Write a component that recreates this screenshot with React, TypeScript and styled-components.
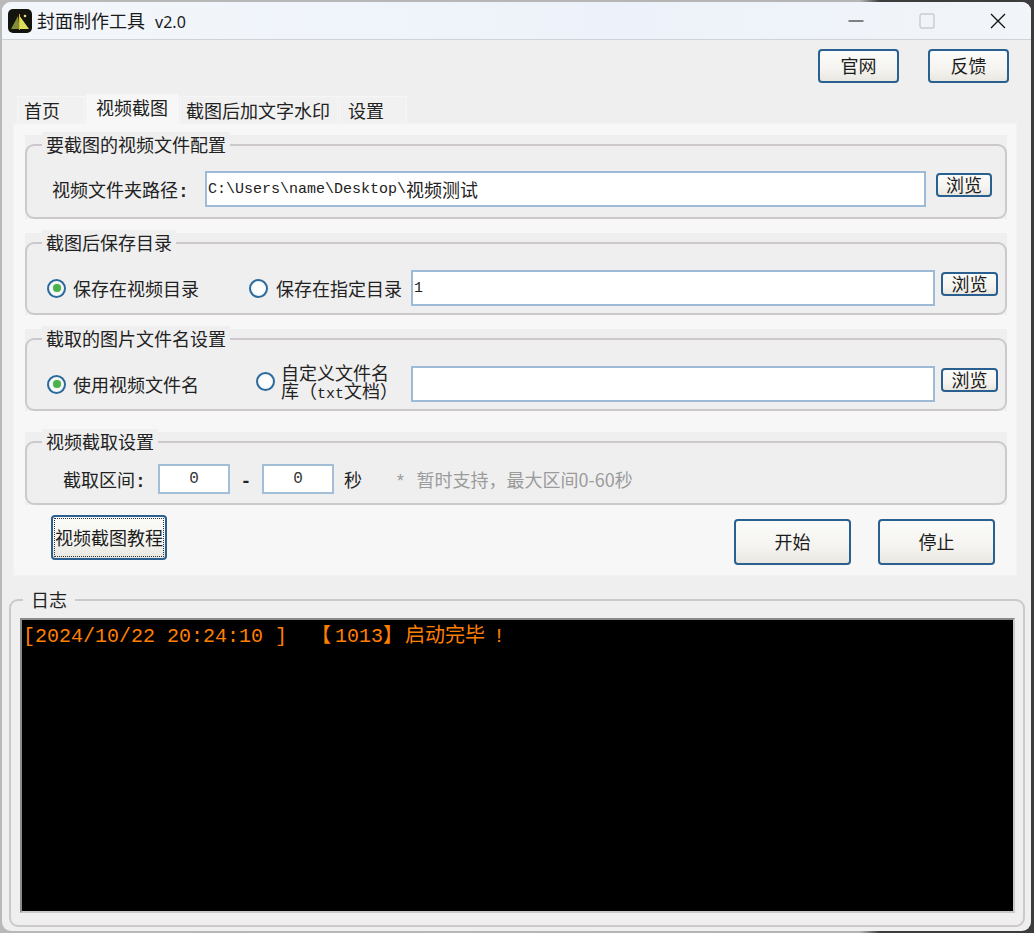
import React from 'react';
import styled, { createGlobalStyle } from 'styled-components';

const CJK = '"Noto Sans CJK SC", "Noto Sans", sans-serif';
const MONO = '"Liberation Mono", "Noto Sans CJK SC", monospace';

const GlobalStyle = createGlobalStyle`
  html, body {
    margin: 0;
    padding: 0;
    background: linear-gradient(90deg, #b9b9b9 0, #b4b4b4 860px, #3c3c3c 880px);
    font-family: ${CJK};
  }
  * { box-sizing: border-box; }
`;

const Desktop = styled.div`
  width: 1034px;
  height: 933px;
  padding: 2px 3px 2px 2px;
  overflow: hidden;
`;

const Window = styled.div`
  width: 1029px;
  height: 929px;
  background: #efefef;
  border-radius: 9px;
  overflow: hidden;
  display: flex;
  flex-direction: column;
  color: #222;
  font-size: 18px;
`;

const TitleBar = styled.div`
  height: 38px;
  flex: none;
  display: flex;
  align-items: center;
  padding-left: 6px;
  background: linear-gradient(90deg, #f3f7fb, #edf2fa 60%, #f1f5f9);
  border-bottom: 1px solid #cfd2d6;
`;

const AppTitle = styled.div`
  margin-left: 5px;
  flex: 1;
  font-size: 18px;
  line-height: 24px;
  color: #1a1a1a;
  white-space: pre;
`;

const TitleVersion = styled.span`
  margin-left: 2px;
  font-family: "Noto Sans", sans-serif;
  font-size: 16px;
`;

const Controls = styled.div`
  display: flex;
  align-items: center;
  padding-right: 25px;
  gap: 55px;
`;

const Toolbar = styled.div`
  display: flex;
  justify-content: flex-end;
  gap: 29px;
  padding: 9px 22px 0 0;
  flex: none;
`;

const Button = styled.button<{ $w: number; $h: number; $focus?: boolean }>`
  width: ${(p) => p.$w}px;
  height: ${(p) => p.$h}px;
  flex: none;
  padding: 0 0 2px;
  border: 2px solid #2a6090;
  border-radius: 4px;
  background: linear-gradient(180deg, #fbfbf9, #f5f4f0 60%, #e9e7e0);
  color: #1c1c1c;
  font-family: ${CJK};
  font-size: 18px;
  line-height: 1;
  white-space: nowrap;
  outline: ${(p) => (p.$focus ? '1px dotted #333' : 'none')};
  outline-offset: ${(p) => (p.$focus ? '-4px' : '0')};
`;

const TabStrip = styled.div`
  display: flex;
  align-items: flex-end;
  height: 29px;
  margin: 11px 0 0 14px;
  flex: none;
  position: relative;
  z-index: 1;
`;

const Tab = styled.div<{ $w: number; $pad: number; $active?: boolean }>`
  width: ${(p) => p.$w}px;
  height: ${(p) => (p.$active ? 30 : 27)}px;
  margin-left: 1px;
  margin-bottom: ${(p) => (p.$active ? -1 : 0)}px;
  padding-left: ${(p) => p.$pad}px;
  line-height: ${(p) => (p.$active ? 24 : 27)}px;
  background: ${(p) => (p.$active ? '#f7f7f7' : '#f1f1f1')};
  border: 1px solid ${(p) => (p.$active ? '#f7f7f7' : '#f6f6f6')};
  border-bottom: none;
  white-space: nowrap;
`;

const Panel = styled.div`
  flex: none;
  width: 1004px;
  height: 453px;
  margin-left: 11px;
  padding: 11px 9px 0 11px;
  background: #f7f7f7;
  border: 1px solid #f2f2f2;
`;

const Group = styled.section<{ $gap?: number }>`
  width: 982px;
  margin-top: ${(p) => p.$gap ?? 0}px;
  padding-top: 9px;
  background: #efefef;
`;

const Frame = styled.div<{ $h: number }>`
  height: ${(p) => p.$h}px;
  border: 2px solid #ccc8cc;
  border-radius: 9px;
  background: #efefef;
`;

const Legend = styled.div`
  width: fit-content;
  margin: -14px 0 0 15px;
  padding: 0 4px;
  height: 24px;
  line-height: 24px;
  background: #efefef;
  white-space: nowrap;
`;

const Row = styled.div<{ $top: number; $left: number; $right: number }>`
  display: flex;
  align-items: center;
  margin-top: ${(p) => p.$top}px;
  padding: 0 ${(p) => p.$right}px 0 ${(p) => p.$left}px;
`;

const Label = styled.span<{ $w?: number; $muted?: boolean; $center?: boolean; $ml?: number }>`
  flex: none;
  width: ${(p) => (p.$w ? `${p.$w}px` : 'auto')};
  margin-left: ${(p) => p.$ml ?? 0}px;
  text-align: ${(p) => (p.$center ? 'center' : 'left')};
  white-space: pre;
  color: ${(p) => (p.$muted ? '#9b9b9b' : '#222')};
`;

const TwoLine = styled.span`
  flex: none;
  width: 110px;
  height: 36px;
  margin: -6px 0 0 6px;
  font-size: 18px;
  line-height: 18px;
  white-space: nowrap;
`;

const Latin = styled.span<{ $size?: number; $bold?: boolean }>`
  font-family: ${MONO};
  font-size: ${(p) => p.$size ?? 15}px;
  line-height: 1;
  font-weight: ${(p) => (p.$bold ? 700 : 400)};
`;

const Field = styled.div<{ $h: number; $ml?: number }>`
  flex: 1;
  height: ${(p) => p.$h}px;
  margin-left: ${(p) => p.$ml ?? 0}px;
  padding-left: 1px;
  display: flex;
  align-items: center;
  background: #fff;
  border: 2px solid #9dbbd6;
  font-size: 18px;
  white-space: pre;
  color: #222;
`;

const SmallField = styled.div`
  width: 72px;
  height: 30px;
  flex: none;
  background: #fff;
  border: 2px solid #a3bfd8;
  display: flex;
  align-items: center;
  justify-content: center;
  font-family: ${MONO};
  font-size: 16px;
  color: #333;
`;

const Radio = styled.span<{ $checked?: boolean; $shift?: number }>`
  width: 19px;
  height: 19px;
  flex: none;
  margin-top: ${(p) => p.$shift ?? 0}px;
  border-radius: 50%;
  border: 2px solid #2c6a9c;
  background: radial-gradient(circle, #fff 40%, #e8edf1);
  display: flex;
  align-items: center;
  justify-content: center;
  &::after {
    content: '';
    display: ${(p) => (p.$checked ? 'block' : 'none')};
    width: 8px;
    height: 8px;
    border-radius: 50%;
    background: #4cb050;
    box-shadow: 0 0 2px #8fd694;
  }
`;

const BrowseButton = styled(Button)<{ $ml: number }>`
  align-self: flex-start;
  margin: 2px 0 0 ${(p) => p.$ml}px;
`;

const Actions = styled.div`
  display: flex;
  align-items: flex-start;
  margin-top: 10px;
  padding-left: 26px;
`;

const ActionButton = styled(Button)<{ $ml: number }>`
  margin: 4px 0 0 ${(p) => p.$ml}px;
`;

const LogGroup = styled.section`
  flex: none;
  width: 1016px;
  height: 328px;
  margin: 23px 0 0 7px;
  border: 2px solid #ccc8cc;
  border-radius: 9px;
  padding: 0 8px 13px 9px;
`;

const LogLegend = styled(Legend)`
  margin: -14px 0 0 3px;
  padding: 0 8px;
`;

const LogBox = styled.div`
  height: 295px;
  margin-top: 7px;
  padding: 4px 0 0 1px;
  background: #000;
  border: 2px solid #8a8a8a;
  border-right-color: #c9c9c9;
  border-bottom-color: #c9c9c9;
  color: #ff7f00;
  font-family: ${MONO};
  font-size: 20px;
  line-height: 26px;
  white-space: pre;
`;

const LogGap = styled.span<{ $w: number }>`
  margin-left: ${(p) => p.$w}px;
`;

const Logo = () => (
  <svg width="24" height="24" viewBox="0 0 24 24">
    <rect width="24" height="24" rx="5" fill="#14140f" />
    <path d="M3 20 L10 7 L12 20 Z" fill="#7f8f3a" />
    <path d="M11 6 L21 20 L11 20 Z" fill="#d9e05a" />
    <path d="M11 5 L11.9 5 L11.9 21 L11 21 Z" fill="#f0b428" />
    <circle cx="17" cy="7" r="1.3" fill="#e6e070" />
  </svg>
);

const MinimizeIcon = () => (
  <svg width="16" height="16" viewBox="0 0 16 16">
    <path d="M0.5 8 H15.5" stroke="#111" strokeWidth="1.2" />
  </svg>
);

const MaximizeIcon = () => (
  <svg width="16" height="16" viewBox="0 0 16 16">
    <rect x="1" y="1" width="14" height="14" rx="2" fill="none" stroke="#c9cbcf" strokeWidth="1.4" />
  </svg>
);

const CloseIcon = () => (
  <svg width="16" height="16" viewBox="0 0 16 16">
    <path d="M1 1 L15 15 M15 1 L1 15" stroke="#111" strokeWidth="1.3" />
  </svg>
);

const App: React.FC = () => (
  <Desktop>
    <GlobalStyle />
    <Window>
      <TitleBar>
        <Logo />
        <AppTitle>
          封面制作工具  <TitleVersion>v2.0</TitleVersion>
        </AppTitle>
        <Controls>
          <MinimizeIcon />
          <MaximizeIcon />
          <CloseIcon />
        </Controls>
      </TitleBar>

      <Toolbar>
        <Button $w={81} $h={34}>官网</Button>
        <Button $w={81} $h={34}>反馈</Button>
      </Toolbar>

      <TabStrip>
        <Tab $w={68} $pad={6}>首页</Tab>
        <Tab $w={93} $pad={9} $active>视频截图</Tab>
        <Tab $w={158} $pad={5}>截图后加文字水印</Tab>
        <Tab $w={68} $pad={8}>设置</Tab>
      </TabStrip>

      <Panel>
        <Group>
          <Frame $h={75}>
            <Legend>要截图的视频文件配置</Legend>
            <Row $top={15} $left={25} $right={13}>
              <Label $w={153}>视频文件夹路径<Latin $size={18} $bold>:</Latin></Label>
              <Field $h={36}>
                <Latin>C:\Users\name\Desktop\</Latin>视频测试
              </Field>
              <BrowseButton $w={56} $h={24} $ml={10}>浏览</BrowseButton>
            </Row>
          </Frame>
        </Group>

        <Group $gap={14}>
          <Frame $h={73}>
            <Legend>截图后保存目录</Legend>
            <Row $top={16} $left={20} $right={7}>
              <Radio $checked />
              <Label $w={176} $ml={7}>保存在视频目录</Label>
              <Radio />
              <Label $w={135} $ml={8}>保存在指定目录</Label>
              <Field $h={36}>
                <Latin>1</Latin>
              </Field>
              <BrowseButton $w={57} $h={24} $ml={6}>浏览</BrowseButton>
            </Row>
          </Frame>
        </Group>

        <Group $gap={14}>
          <Frame $h={73}>
            <Legend>截取的图片文件名设置</Legend>
            <Row $top={16} $left={20} $right={7}>
              <Radio $checked />
              <Label $w={183} $ml={7}>使用视频文件名</Label>
              <Radio $shift={-5} />
              <TwoLine>
                自定义文件名
                <br />
                {'库\uFF08'}<Latin>txt</Latin>{'文档\uFF09'}
              </TwoLine>
              <Field $h={36} $ml={20} />
              <BrowseButton $w={57} $h={24} $ml={6}>浏览</BrowseButton>
            </Row>
          </Frame>
        </Group>

        <Group $gap={21}>
          <Frame $h={64}>
            <Legend>视频截取设置</Legend>
            <Row $top={11} $left={36} $right={7}>
              <Label $w={95}>截取区间<Latin $size={18} $bold>:</Latin></Label>
              <SmallField>0</SmallField>
              <Label $w={32} $center><Latin $size={18} $bold>-</Latin></Label>
              <SmallField>0</SmallField>
              <Label $w={51} $ml={10}>秒</Label>
              <Label $muted><Latin $size={18}>* </Latin>{'暂时支持\uFF0C最大区间0-60秒'}</Label>
            </Row>
          </Frame>
        </Group>

        <Actions>
          <Button $w={116} $h={45} $focus>视频截图教程</Button>
          <ActionButton $w={117} $h={46} $ml={567}>开始</ActionButton>
          <ActionButton $w={117} $h={46} $ml={27}>停止</ActionButton>
        </Actions>
      </Panel>

      <LogGroup>
        <LogLegend>日志</LogLegend>
        <LogBox>[2024/10/22 20:24:10 ]  【<LogGap $w={4}>1013</LogGap>】<LogGap $w={2}>启动完毕</LogGap><LogGap $w={8}>!</LogGap></LogBox>
      </LogGroup>
    </Window>
  </Desktop>
);

export default App;
